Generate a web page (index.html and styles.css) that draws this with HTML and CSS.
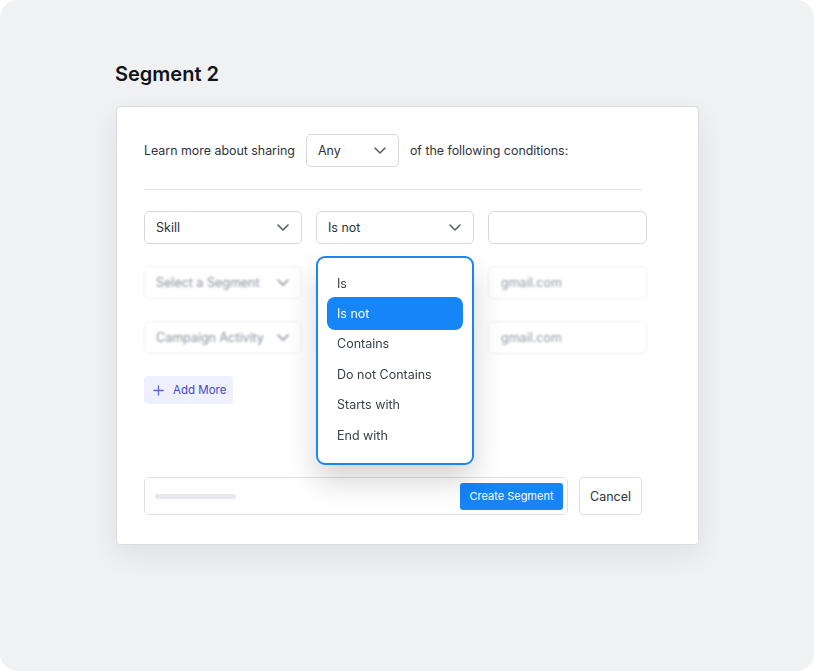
FILE: index.html
```html
<!DOCTYPE html>
<html>
<head>
<meta charset="utf-8">
<link rel="stylesheet" href="styles.css">
</head>
<body>
<div class="frame">
  <h1 class="title">Segment 2</h1>
  <div class="card">
    <div class="intro">
      <span class="intro-text">Learn more about sharing</span>
      <div class="select select-any">
        <span>Any</span>
        <svg class="chev" viewBox="0 0 12 7" width="12" height="7"><path d="M1 1l5 5 5-5" fill="none" stroke="currentColor" stroke-width="1.6" stroke-linecap="round" stroke-linejoin="round"/></svg>
      </div>
      <span class="intro-text">of the following conditions:</span>
    </div>
    <div class="divider"></div>
    <div class="rows">
      <div class="row">
        <div class="select"><span>Skill</span><svg class="chev" viewBox="0 0 12 7" width="12" height="7"><path d="M1 1l5 5 5-5" fill="none" stroke="currentColor" stroke-width="1.6" stroke-linecap="round" stroke-linejoin="round"/></svg></div>
        <div class="select-wrap">
          <div class="select"><span>Is not</span><svg class="chev" viewBox="0 0 12 7" width="12" height="7"><path d="M1 1l5 5 5-5" fill="none" stroke="currentColor" stroke-width="1.6" stroke-linecap="round" stroke-linejoin="round"/></svg></div>
          <ul class="menu">
            <li class="item">Is</li>
            <li class="item active">Is not</li>
            <li class="item">Contains</li>
            <li class="item">Do not Contains</li>
            <li class="item">Starts with</li>
            <li class="item">End with</li>
          </ul>
        </div>
        <div class="input"></div>
      </div>
      <div class="row blurred">
        <div class="select faint"><span>Select a Segment</span><svg class="chev" viewBox="0 0 12 7" width="12" height="7"><path d="M1 1l5 5 5-5" fill="none" stroke="currentColor" stroke-width="1.6" stroke-linecap="round" stroke-linejoin="round"/></svg></div>
        <div class="select faint"></div>
        <div class="input faint"><span>gmail.com</span></div>
      </div>
      <div class="row blurred">
        <div class="select faint"><span>Campaign Activity</span><svg class="chev" viewBox="0 0 12 7" width="12" height="7"><path d="M1 1l5 5 5-5" fill="none" stroke="currentColor" stroke-width="1.6" stroke-linecap="round" stroke-linejoin="round"/></svg></div>
        <div class="select faint"></div>
        <div class="input faint"><span>gmail.com</span></div>
      </div>
    </div>
    <button class="add-more">
      <svg viewBox="0 0 12 12" width="11" height="11"><path d="M6 1v10M1 6h10" fill="none" stroke="currentColor" stroke-width="1.4" stroke-linecap="round"/></svg>
      <span>Add More</span>
    </button>
    <div class="footer">
      <div class="name-box">
        <div class="placeholder-bar"></div>
        <button class="create">Create Segment</button>
      </div>
      <button class="cancel">Cancel</button>
    </div>
  </div>
</div>
</body>
</html>
```

FILE: styles.css
```css
* { box-sizing: border-box; }
html, body { margin: 0; padding: 0; background: #ffffff; }
body { font-family: Inter, "Noto Sans", "Liberation Sans", sans-serif; color: #2b303a; }

.frame {
  width: 814px;
  height: 671px;
  background: #f0f1f3;
  border-radius: 18px;
  padding: 62px 0 0 115px;
}

.title {
  margin: 0;
  font-size: 20px;
  line-height: 24px;
  font-weight: 600;
  color: #121418;
}

.card {
  margin-top: 20px;
  width: 583px;
  height: 439px;
  margin-left: 1px;
  background: #ffffff;
  border: 1px solid #dcdde1;
  border-radius: 4px;
  box-shadow: 0 10px 28px rgba(20, 24, 40, 0.08);
  padding: 27px 0 0 27px;
}

.intro {
  display: flex;
  align-items: center;
  gap: 11px;
  height: 33px;
}
.intro-text { font-size: 12.4px; color: #2e333d; }

.select {
  height: 33px;
  width: 158px;
  border: 1px solid #d7d9df;
  border-radius: 5px;
  display: flex;
  align-items: center;
  justify-content: space-between;
  padding: 0 12px 0 11px;
  font-size: 12.5px;
  color: #2e333d;
  background: #fff;
}
.select-any { width: 93px; }
.chev { color: #5b616d; flex: none; }

.divider {
  width: 498px;
  height: 1px;
  background: #e6e7ea;
  margin-top: 22px;
}

.rows {
  margin-top: 21px;
  display: flex;
  flex-direction: column;
  gap: 22px;
}
.row {
  display: flex;
  gap: 14px;
}
.select-wrap { position: relative; }

.input {
  width: 159px;
  height: 33px;
  border: 1px solid #d7d9df;
  border-radius: 6px;
  display: flex;
  align-items: center;
  padding-left: 12px;
  font-size: 12.5px;
  color: #9aa0aa;
}

.blurred { filter: blur(1.1px); }
.faint { border-color: #eceef1; color: #9297a1; }
.faint .chev { color: #8d929c; }

.menu {
  position: absolute;
  top: 45px;
  left: 0;
  width: 158px;
  height: 209px;
  margin: 0;
  list-style: none;
  padding: 10px 9px 0 9px;
  background: #fff;
  border: 2px solid #1a86f5;
  border-radius: 9px;
  box-shadow: 0 16px 30px rgba(0, 0, 0, 0.17);
  z-index: 2;
}
.item {
  height: 30.4px;
  display: flex;
  align-items: center;
  padding-left: 10px;
  font-size: 12.5px;
  color: #3a404c;
}
.item.active {
  background: #1585f8;
  color: #fff;
  border-radius: 8px;
  height: 33px;
  margin: -1.3px 0;
}

.add-more {
  margin-top: 22px;
  height: 28px;
  width: 89px;
  border: none;
  border-radius: 4px;
  background: #eef0fd;
  color: #4448c8;
  font-family: inherit;
  font-size: 11.5px;
  display: flex;
  align-items: center;
  gap: 9px;
  padding: 0 0 0 9px;
}
.add-more svg { color: #5f63d8; }

.footer {
  margin-top: 73px;
  display: flex;
  gap: 11px;
}
.name-box {
  width: 424px;
  height: 38px;
  border: 1px solid #dfe1e6;
  border-radius: 5px;
  display: flex;
  align-items: center;
  justify-content: space-between;
  padding: 0 4px 0 10px;
}
.placeholder-bar {
  width: 81px;
  height: 5px;
  border-radius: 3px;
  background: #e5e7ec;
}
.create {
  height: 27px;
  width: 103px;
  border: none;
  border-radius: 3px;
  background: #1585f8;
  color: #fff;
  font-family: inherit;
  font-size: 11px;
  padding: 0;
}
.cancel {
  width: 63px;
  height: 38px;
  border: 1px solid #dcdfe4;
  border-radius: 4px;
  background: #fff;
  font-family: inherit;
  font-size: 12.5px;
  color: #2e333d;
  padding: 0;
}
```
